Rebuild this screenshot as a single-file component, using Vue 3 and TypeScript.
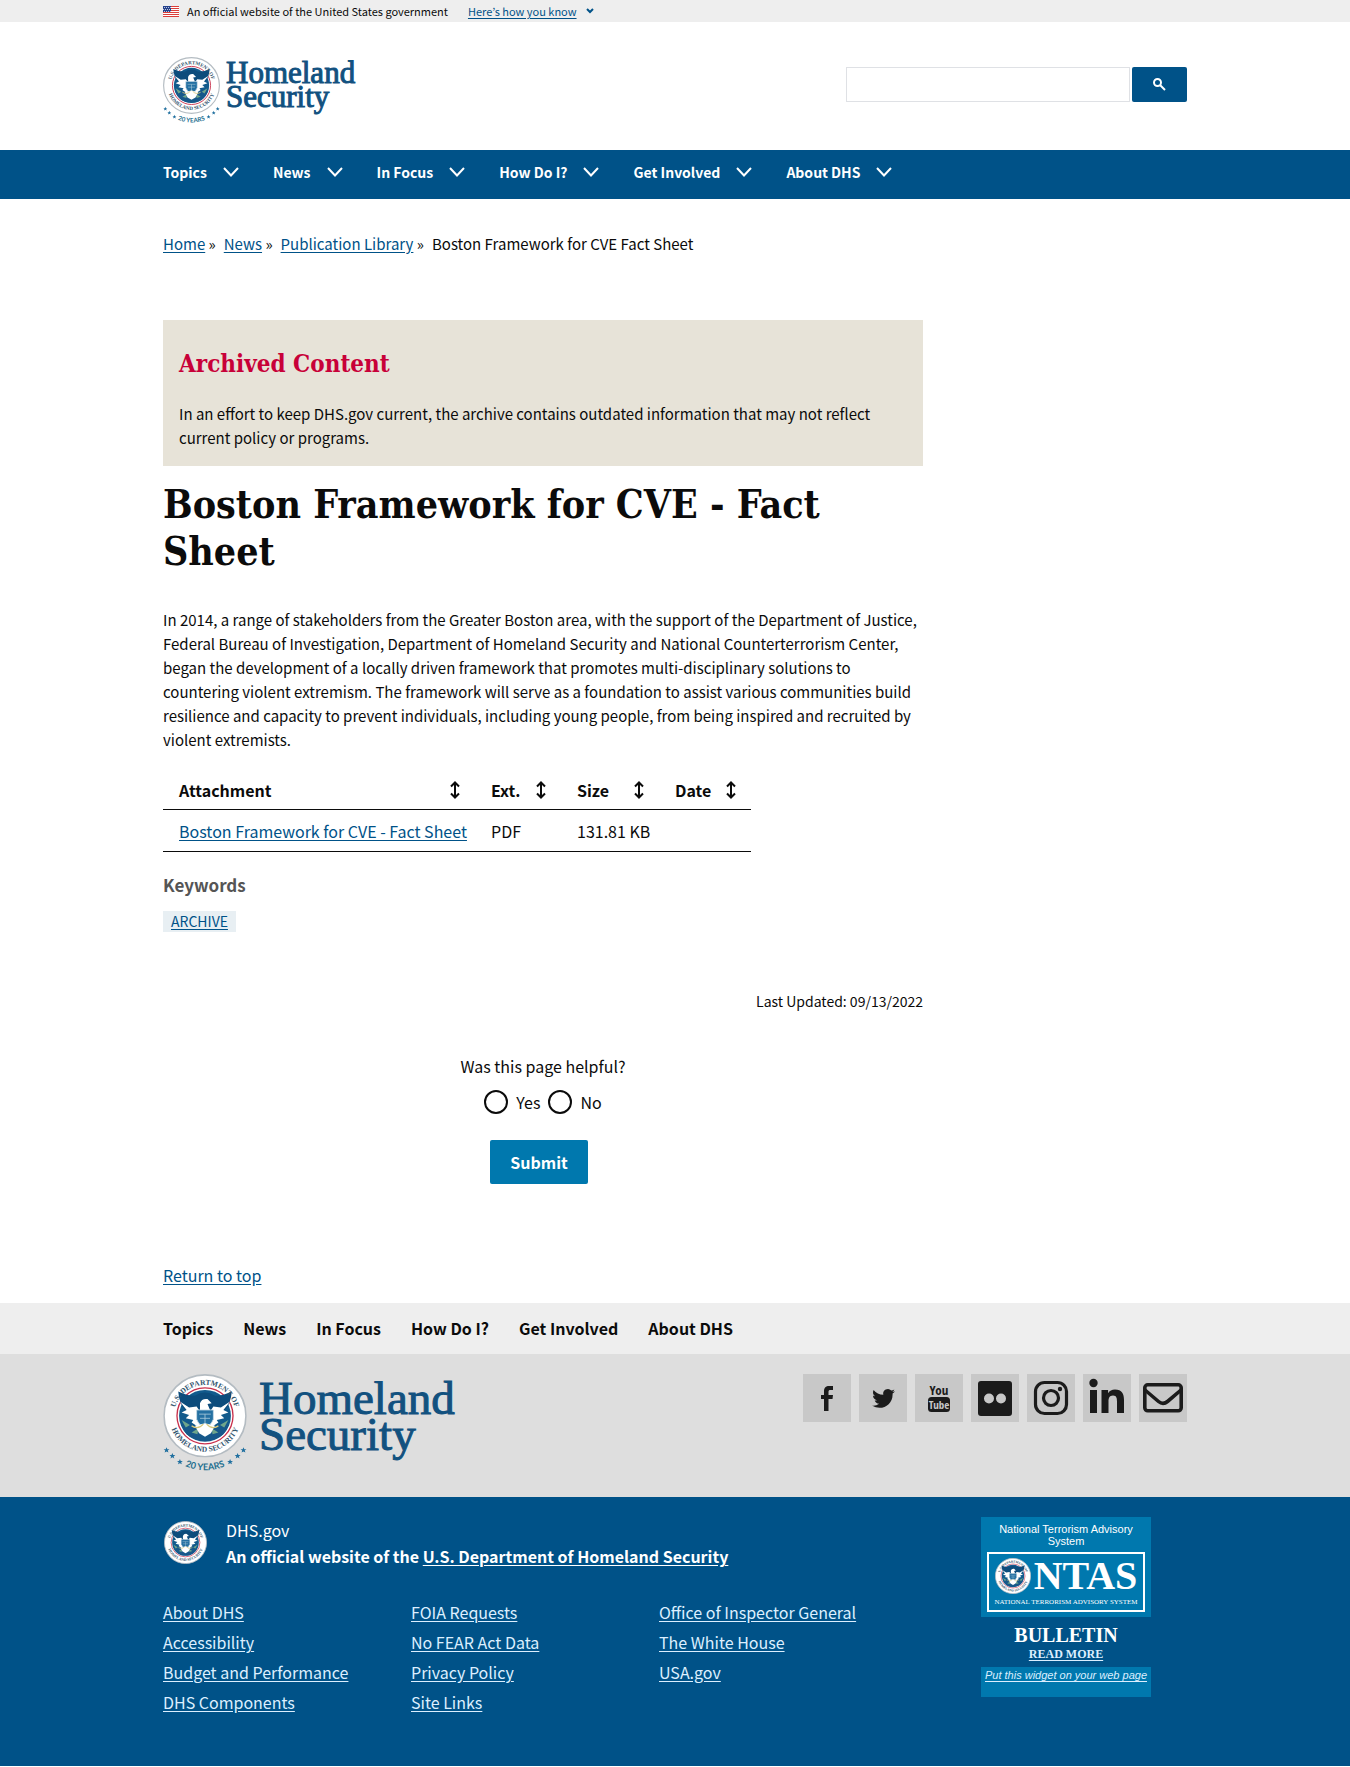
<script setup lang="ts">
import { ref } from 'vue'

interface SortColumn {
  label: string
  key: string
}

const menu: string[] = ['Topics', 'News', 'In Focus', 'How Do I?', 'Get Involved', 'About DHS']
const crumbs: string[] = ['Home', 'News', 'Publication Library']
const columns: SortColumn[] = [
  { label: 'Attachment', key: 'attachment' },
  { label: 'Ext.', key: 'ext' },
  { label: 'Size', key: 'size' },
  { label: 'Date', key: 'date' },
]
const footerLinks: string[][] = [
  ['About DHS', 'Accessibility', 'Budget and Performance', 'DHS Components'],
  ['FOIA Requests', 'No FEAR Act Data', 'Privacy Policy', 'Site Links'],
  ['Office of Inspector General', 'The White House', 'USA.gov'],
]
const query = ref('')
const helpful = ref('')
</script>

<template>
  <div class="page" id="top">
    <svg class="defs" width="0" height="0" aria-hidden="true">
      <defs>
        <path id="arc-top" d="M13 50A37 37 0 0 1 87 50" />
        <path id="arc-bottom" d="M7 50A43 43 0 0 0 93 50" />
        <path id="arc-years" d="M-15 50A65 65 0 0 0 115 50" />
        <path id="star" d="M0-3.500L1-1 3.500-1 1.500.6 2.300 3 0 1.600-2.300 3-1.500.6-3.500-1-1-1Z" />
      </defs>
      <symbol id="seal" viewBox="0 0 100 100">
        <circle cx="50" cy="50" r="49" fill="#fff" stroke="#b4bcc2" stroke-width="2" />
        <circle cx="50" cy="50" r="33.500" fill="#fff" stroke="#c8304c" stroke-width="1.600" />
        <circle cx="50" cy="50" r="31" fill="#125a8c" />
        <path d="M22 61Q28 55 35 60L44 68 50 78 56 68 65 60Q72 55 78 61 73 79 50 80 27 79 22 61Z" fill="#17588a" />
        <path d="M22 55l10 6-5 3zM78 55l-10 6 5 3zM34 70l8-5-1 7zM66 70l-8-5 1 7z" fill="#6fa58b" />
        <path d="M18 21Q28 26 38 26 44 22 50 22 56 22 62 26 72 26 82 21 81 36 73 44L61 54 50 50 39 54 27 44Q19 36 18 21Z" fill="#0d4c7c" />
        <path d="M20 33L31 40 40 39 46 48 43 64 34 58 36 55 27 53 31 49 22 46 28 43ZM80 33L69 40 60 39 54 48 57 64 66 58 64 55 73 53 69 49 78 46 72 43Z" fill="#fff" />
        <path d="M44 35Q46 29 53 30L58 35 53 36 56 43 50 45 44 43Z" fill="#fff" />
        <path d="M40 43H60V54Q57 62 50 64 43 62 40 54Z" fill="#2470a2" stroke="#c9dce7" stroke-width="1" />
        <path d="M43 48H57M44 53H56M50 48V62" stroke="#a8c9da" stroke-width="1" />
        <path d="M38 62L50 59 62 62 57 71 50 75 43 71Z" fill="#fff" />
        <path d="M34 62Q42 67 48 60M66 62Q58 67 52 60" fill="none" stroke="#d6c77c" stroke-width="1.500" />
        <g font-family="'Liberation Serif', serif" font-size="9" font-weight="700" fill="#33566f" text-anchor="middle">
          <text><textPath href="#arc-top" startOffset="50%">U.S. DEPARTMENT OF</textPath></text>
          <text><textPath href="#arc-bottom" startOffset="50%">HOMELAND SECURITY</textPath></text>
        </g>
      </symbol>
      <symbol id="seal-years" viewBox="0 0 100 116">
        <use href="#seal" width="100" height="100" />
        <g fill="#1f6f9f">
          <use href="#star" x="4" y="91" />
          <use href="#star" x="11" y="98" />
          <use href="#star" x="20" y="105" />
          <use href="#star" x="80" y="105" />
          <use href="#star" x="89" y="98" />
          <use href="#star" x="96" y="91" />
        </g>
        <text font-family="Lato, sans-serif" font-size="11" font-weight="700" fill="#1f6f8f" text-anchor="middle">
          <textPath href="#arc-years" startOffset="50%">20 YEARS</textPath>
        </text>
      </symbol>
    </svg>

    <div class="banner">
      <div class="wrap banner-row">
        <svg class="flag" viewBox="0 0 16 11" aria-hidden="true">
          <path fill="#fff" d="M0 0h16v11H0z" />
          <path fill="#db3e3a" d="M0 0h16v1H0zM0 2h16v1H0zM0 4h16v1H0zM0 6h16v1H0zM0 8h16v1H0zM0 10h16v1H0z" />
          <path fill="#24418c" d="M0 0h8v6H0z" />
          <path stroke="#fff" stroke-dasharray="1 1" d="M1 1.500h7M0 3.500h7M1 5.500h7" stroke-width=".7" />
        </svg>
        <span>An official website of the United States government</span>
        <a href="#top">Here’s how you know</a>
        <svg class="tiny-chevron" viewBox="0 0 8 6" aria-hidden="true"><path d="M1 1l3 3 3-3" /></svg>
      </div>
    </div>

    <header class="wrap header">
      <a class="logo" href="#top" aria-label="Homeland Security home">
        <svg class="mark" aria-hidden="true"><use href="#seal-years" /></svg>
        <span class="logo-text">Homeland<br />Security</span>
      </a>
      <form class="search" role="search" @submit.prevent>
        <input v-model="query" type="text" aria-label="Search" />
        <button type="submit" aria-label="Search">
          <svg viewBox="0 0 13 13" aria-hidden="true"><circle cx="4.500" cy="4.500" r="3.500" /><path d="M7 7l5 5" /></svg>
        </button>
      </form>
    </header>

    <nav class="main-nav" aria-label="Main">
      <div class="wrap main-row">
        <button v-for="item in menu" :key="item" type="button">
          <span>{{ item }}</span>
          <svg viewBox="0 0 16 10" aria-hidden="true"><path d="M1 1l7 7.500L15 1" /></svg>
        </button>
      </div>
    </nav>

    <main class="wrap">
      <nav class="crumbs" aria-label="Breadcrumb">
        <span v-for="c in crumbs" :key="c"><a href="#top">{{ c }}</a> »</span>
        <span>Boston Framework for CVE Fact Sheet</span>
      </nav>

      <div class="column">
        <section class="archived">
          <h2>Archived Content</h2>
          <p>In an effort to keep DHS.gov current, the archive contains outdated information that may not reflect current policy or programs.</p>
        </section>
        <h1>Boston Framework for CVE - Fact Sheet</h1>
        <p class="intro">In 2014, a range of stakeholders from the Greater Boston area, with the support of the Department of Justice, Federal Bureau of Investigation, Department of Homeland Security and National Counterterrorism Center, began the development of a locally driven framework that promotes multi-disciplinary solutions to countering violent extremism. The framework will serve as a foundation to assist various communities build resilience and capacity to prevent individuals, including young people, from being inspired and recruited by violent extremists.</p>

        <table>
          <thead>
            <tr>
              <th v-for="col in columns" :key="col.key" scope="col" :class="col.key">
                <div class="th-row">
                  <span>{{ col.label }}</span>
                  <button type="button" :aria-label="`Sort by ${col.label}`">
                    <svg viewBox="0 0 10 18" aria-hidden="true"><path d="M5 2v14M1 5.500L5 1.500l4 4M1 12.500l4 4 4-4" /></svg>
                  </button>
                </div>
              </th>
            </tr>
          </thead>
          <tbody>
            <tr>
              <td><a href="#top">Boston Framework for CVE - Fact Sheet</a></td>
              <td>PDF</td>
              <td>131.81 KB</td>
              <td></td>
            </tr>
          </tbody>
        </table>

        <h3>Keywords</h3>
        <div class="tags"><a href="#top">ARCHIVE</a></div>
        <p class="updated">Last Updated: 09/13/2022</p>

        <form class="survey" @submit.prevent>
          <fieldset>
            <legend>Was this page helpful?</legend>
            <div class="choices">
              <label><input v-model="helpful" type="radio" name="helpful" value="yes" /><span>Yes</span></label>
              <label><input v-model="helpful" type="radio" name="helpful" value="no" /><span>No</span></label>
            </div>
          </fieldset>
          <button type="submit">Submit</button>
        </form>
      </div>
      <p class="return"><a href="#top">Return to top</a></p>
    </main>

    <footer>
      <nav class="foot-nav" aria-label="Footer">
        <div class="wrap foot-nav-row">
          <a v-for="item in menu" :key="item" href="#top">{{ item }}</a>
        </div>
      </nav>

      <div class="foot-brand">
        <div class="wrap brand-row">
          <a class="logo large" href="#top" aria-label="Homeland Security home">
            <svg class="mark" aria-hidden="true"><use href="#seal-years" /></svg>
            <span class="logo-text">Homeland<br />Security</span>
          </a>
          <div class="social">
            <a href="#top" aria-label="Facebook">
              <svg viewBox="0 0 48 48"><path d="M21 37V25h-3v-4h3v-3.500c0-4 2-5.500 5-5.500h4v4h-2.500c-1.500 0-2 .6-2 2v3H30l-.5 4h-4v12z" /></svg>
            </a>
            <a href="#top" aria-label="Twitter">
              <svg viewBox="0 0 48 48"><path d="M36 17.200c-.9.400-1.800.7-2.700.8 1-.6 1.700-1.500 2-2.600-.9.500-1.900.9-3 1.100a4.700 4.700 0 0 0-8 4.300c-3.900-.2-7.400-2.100-9.700-4.900-1.200 2.200-.6 4.900 1.500 6.300-.8 0-1.500-.2-2.100-.6 0 2.300 1.600 4.200 3.800 4.700-.7.200-1.400.2-2.100.1.600 1.900 2.300 3.200 4.400 3.300a9.500 9.500 0 0 1-7 1.900c9 5.800 20.500-.2 20.500-11.200v-.8c1-.7 1.800-1.500 2.400-2.400z" /></svg>
            </a>
            <a href="#top" aria-label="YouTube">
              <svg viewBox="0 0 48 48">
                <rect x="13" y="23" width="22" height="15" rx="3.500" />
                <g class="tube" text-anchor="middle">
                  <text x="24" y="21" font-size="13">You</text>
                  <text x="24" y="35" font-size="11" fill="#c8c8c8">Tube</text>
                </g>
              </svg>
            </a>
            <a href="#top" aria-label="Flickr">
              <svg viewBox="0 0 48 48"><path fill-rule="evenodd" d="M10 7h28a3 3 0 0 1 3 3v29a3 3 0 0 1-3 3H10a3 3 0 0 1-3-3V10a3 3 0 0 1 3-3zM18 19.500a5 5 0 1 0 0 10 5 5 0 0 0 0-10zM30 19.500a5 5 0 1 0 0 10 5 5 0 0 0 0-10z" /></svg>
            </a>
            <a href="#top" aria-label="Instagram">
              <svg viewBox="0 0 48 48"><g fill="none" stroke="#1b1b1b" stroke-width="3.200"><rect x="8.500" y="8.500" width="31" height="31" rx="9" /><circle cx="24" cy="24" r="7.500" /></g><circle cx="33" cy="15" r="2.200" /></svg>
            </a>
            <a href="#top" aria-label="LinkedIn">
              <svg viewBox="0 0 48 48"><path d="M7 16h7v23H7zM18.500 16h6.600v3.200c1.500-2.500 3.700-3.700 6.900-3.700 7 0 9 4.500 9 10.500v13h-7V27.500c0-3-.3-6-4-6s-4.500 3-4.500 5.900V39h-7z" /><circle cx="10.500" cy="9" r="4.200" /></svg>
            </a>
            <a href="#top" aria-label="Email">
              <svg viewBox="0 0 48 48"><g fill="none" stroke="#1b1b1b" stroke-width="3.600" stroke-linejoin="round"><rect x="5.800" y="10.800" width="36.400" height="26" rx="3" /><path d="M6 16l13.500 11.500c3 2.500 6 2.500 9 0L42 16" /></g></svg>
            </a>
          </div>
        </div>
      </div>

      <div class="foot-blue">
        <div class="wrap blue-row">
          <div class="identity">
            <div class="id-row">
              <svg class="small-seal" aria-hidden="true"><use href="#seal" /></svg>
              <div>
                <p>DHS.gov</p>
                <p class="strong">An official website of the <a href="#top">U.S. Department of Homeland Security</a></p>
              </div>
            </div>
            <div class="link-grid">
              <ul v-for="(group, i) in footerLinks" :key="i">
                <li v-for="link in group" :key="link"><a href="#top">{{ link }}</a></li>
              </ul>
            </div>
          </div>
          <aside class="ntas">
            <div class="ntas-top">
              <p>National Terrorism Advisory System</p>
              <div class="ntas-box">
                <div class="ntas-name">
                  <svg aria-hidden="true"><use href="#seal" /></svg>
                  <span>NTAS</span>
                </div>
                <div class="ntas-sub">NATIONAL TERRORISM ADVISORY SYSTEM</div>
              </div>
            </div>
            <div class="ntas-mid">
              <strong>BULLETIN</strong>
              <a href="#top">READ MORE</a>
            </div>
            <div class="ntas-end"><a href="#top">Put this widget on your web page</a></div>
          </aside>
        </div>
      </div>
    </footer>
  </div>
</template>

<style>
body {
  margin: 0;
  background: #fff;
}
</style>

<style scoped>
.page {
  font-family: "Noto Sans CJK KR", "Open Sans", sans-serif;
  font-size: 15px;
  line-height: 24px;
  color: #0b0b0b;
}
.page *,
.page *::before {
  box-sizing: border-box;
}
.defs {
  position: absolute;
}
p, h1, h2, h3, ul, fieldset {
  margin: 0;
  padding: 0;
}
a {
  color: #005288;
  text-underline-offset: 2px;
}
button, input {
  font: inherit;
}
svg {
  display: block;
  flex: none;
}
.wrap {
  max-width: 1024px;
  margin: 0 auto;
}
.banner {
  background: #eee;
}
.banner-row {
  display: flex;
  align-items: center;
  height: 22px;
  font-size: 11px;
  line-height: 22px;
}
.flag {
  width: 16px;
  height: 11px;
  margin-right: 8px;
}
.banner a {
  margin: 0 9px 0 20px;
}
.tiny-chevron {
  width: 8px;
  height: 6px;
}
.tiny-chevron path {
  fill: none;
  stroke: #005288;
  stroke-width: 2;
}
.header {
  display: flex;
  justify-content: space-between;
  align-items: flex-start;
  height: 128px;
  padding-top: 35px;
}
.logo {
  display: flex;
  align-items: flex-start;
  gap: 6px;
  text-decoration: none;
}
.mark {
  width: 57px;
  height: 66px;
}
.logo-text {
  padding-top: 4px;
  font-family: "Liberation Serif", serif;
  font-size: 31px;
  line-height: 24px;
  color: #12517f;
  -webkit-text-stroke: 1px #12517f;
}
.search {
  display: flex;
  gap: 2px;
  margin-top: 10px;
}
.search input {
  width: 284px;
  height: 35px;
  padding: 0 8px;
  border: 1px solid #dfe1e5;
  background: #fff;
}
.search button {
  display: grid;
  place-items: center;
  width: 55px;
  height: 35px;
  padding: 0;
  border: 0;
  border-radius: 2px;
  background: #005288;
}
.search svg {
  width: 13px;
  height: 13px;
  fill: none;
  stroke: #fff;
  stroke-width: 2;
}
.main-nav {
  background: #005288;
}
.main-row {
  display: flex;
  gap: 34px;
  height: 49px;
  padding-bottom: 5px;
}
.main-row button {
  display: flex;
  align-items: center;
  gap: 16px;
  padding: 0;
  border: 0;
  background: none;
  color: #fff;
  font-size: 14px;
  font-weight: 700;
}
.main-row svg {
  width: 16px;
  height: 10px;
  fill: none;
  stroke: #fff;
  stroke-width: 2;
}
.crumbs {
  display: flex;
  gap: 8px;
  padding-top: 33px;
}
.column {
  max-width: 760px;
  padding-top: 64px;
}
.archived {
  padding: 28px 16px 16px;
  background: #e7e3d8;
}
.archived h2 {
  margin-bottom: 22px;
  font: 700 24px/32px "DejaVu Serif Condensed", "DejaVu Serif", serif;
  color: #c80038;
}
h1 {
  margin: 15px 0 33px;
  font: 700 39px/47px "DejaVu Serif Condensed", "DejaVu Serif", serif;
}
table {
  width: 588px;
  margin-top: 16px;
  border-collapse: separate;
  border-spacing: 0;
  table-layout: fixed;
  font-size: 16px;
}
th, td {
  height: 42px;
  padding: 0 16px;
  border-bottom: 1px solid #0b0b0b;
  text-align: left;
  white-space: nowrap;
}
.th-row {
  display: flex;
  justify-content: space-between;
  align-items: center;
}
th button {
  padding: 0;
  border: 0;
  background: none;
}
th svg {
  width: 10px;
  height: 18px;
  fill: none;
  stroke: #0b0b0b;
  stroke-width: 2;
}
.attachment {
  width: 312px;
}
.ext {
  width: 86px;
}
.size {
  width: 98px;
}
.attachment, .ext, .size, .date {
  padding: 3px 15px 0 16px;
}
h3 {
  margin-top: 20px;
  font-size: 17px;
  line-height: 26px;
  color: #555;
}
.tags {
  display: flex;
  margin-top: 13px;
}
.tags a {
  padding: 0 8px;
  background: #e8eff3;
  font-size: 14px;
  line-height: 21px;
}
.updated {
  margin-top: 57px;
  font-size: 14px;
  text-align: right;
}
.survey {
  display: flex;
  flex-direction: column;
  align-items: center;
  margin-top: 41px;
  font-size: 16px;
}
fieldset {
  display: flex;
  flex-direction: column;
  align-items: center;
  border: 0;
}
legend {
  padding: 0;
  margin: 0 auto;
}
.choices {
  display: flex;
  gap: 8px;
  padding-top: 12px;
}
.choices label {
  display: flex;
  gap: 8px;
}
.choices input {
  appearance: none;
  width: 24px;
  height: 24px;
  margin: 0;
  border: 2px solid #0b0b0b;
  border-radius: 50%;
  background: #fff;
}
.choices input:checked {
  box-shadow: inset 0 0 0 4px #fff;
  background: #005288;
}
.survey button {
  height: 44px;
  margin: 26px 8px 0 0;
  padding: 0 20px;
  border: 0;
  border-radius: 2px;
  background: #0078ae;
  color: #fff;
  font-weight: 700;
}
.return {
  padding: 79px 0 16px;
  font-size: 16px;
}
.foot-nav {
  background: #eee;
}
.foot-nav-row {
  display: flex;
  gap: 30px;
  font-size: 16px;
  font-weight: 700;
  line-height: 51px;
}
.foot-nav a {
  color: #0b0b0b;
  text-decoration: none;
}
.foot-brand {
  background: #dedede;
}
.brand-row {
  display: flex;
  justify-content: space-between;
  align-items: flex-start;
  height: 143px;
  padding-top: 20px;
}
.large {
  gap: 12px;
}
.large .mark {
  width: 84px;
  height: 97px;
}
.large .logo-text {
  font-size: 47px;
  line-height: 36px;
  padding-top: 6px;
}
.social {
  display: flex;
  gap: 8px;
}
.social a {
  width: 48px;
  height: 48px;
  background: #c8c8c8;
}
.social svg {
  width: 48px;
  height: 48px;
  fill: #1b1b1b;
}
.tube {
  font-family: "Liberation Sans Narrow", "Open Sans Condensed", "DejaVu Sans Condensed", sans-serif;
  font-weight: 700;
}
.foot-blue {
  background: #005288;
  color: #fff;
}
.blue-row {
  display: flex;
  justify-content: space-between;
  padding: 20px 36px 49px 0;
  font-size: 16px;
}
.identity {
  flex: 1;
}
.foot-blue a {
  color: #dcefff;
}
.foot-blue .strong a {
  color: #fff;
}
.id-row {
  display: flex;
  gap: 19px;
}
.id-row p {
  line-height: 26px;
}
.small-seal {
  width: 43px;
  height: 43px;
  margin: 4px 0 0 1px;
}
.strong {
  font-weight: 700;
}
.link-grid {
  display: grid;
  grid-template-columns: repeat(3, 248px);
  margin-top: 28px;
}
ul {
  list-style: none;
}
li {
  line-height: 30px;
}
.ntas {
  width: 170px;
  text-align: center;
}
.ntas-top {
  padding: 6px 6px 5px;
  background: #0078ae;
  font: 11px/12px "Liberation Sans", sans-serif;
}
.ntas-box {
  margin-top: 5px;
  padding: 3px 0 1px;
  border: 2px solid #fff;
  font-family: "Liberation Serif", serif;
}
.ntas-name {
  display: flex;
  justify-content: center;
  align-items: center;
  gap: 3px;
  height: 38px;
  font-size: 40px;
  line-height: 38px;
  font-weight: 700;
}
.ntas-name svg {
  width: 36px;
  height: 36px;
}
.ntas-sub {
  font-size: 7px;
  line-height: 14px;
  white-space: nowrap;
}
.ntas-mid {
  display: flex;
  flex-direction: column;
  align-items: center;
  padding: 8px 0 4px;
  font-family: "Liberation Serif", serif;
  font-weight: 700;
}
.ntas-mid strong {
  font-size: 20px;
  line-height: 20px;
}
.ntas-mid a {
  font-size: 12px;
  line-height: 18px;
}
.ntas-end {
  height: 30px;
  background: #0078ae;
  font: italic 11px/16px "Liberation Sans", sans-serif;
  white-space: nowrap;
}
</style>
